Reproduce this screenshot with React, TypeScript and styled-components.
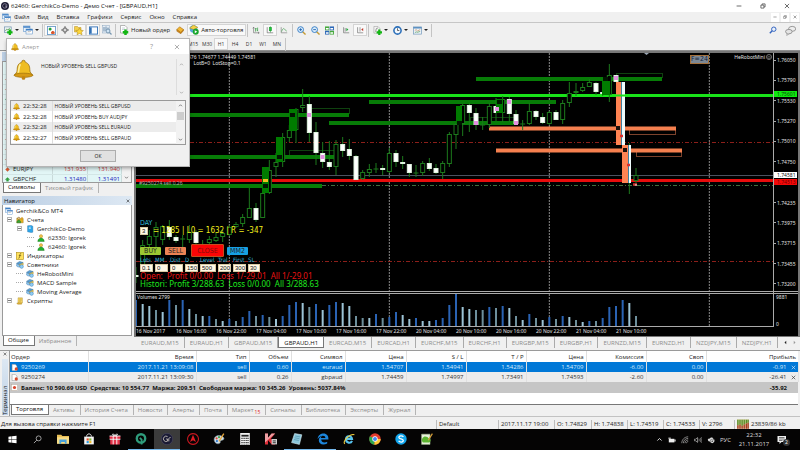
import React from "react";
import styled, { createGlobalStyle, css } from "styled-components";

const UI = `"Open Sans", "Noto Sans", sans-serif`;
const CHART = `"Noto Sans", "DejaVu Sans", sans-serif`;
const ROBOT = `"DejaVu Sans Condensed", "DejaVu Sans", sans-serif`;

const GlobalStyle = createGlobalStyle`
  * { box-sizing: border-box; }
  html, body { margin: 0; padding: 0; }
  body { background: #f0f0f0; color: #222; font: 6px/8px ${UI}; overflow: hidden; }
  button, input, select { font: inherit; color: inherit; margin: 0; padding: 0; border: 0; background: none; border-radius: 0; }
  table { border-collapse: collapse; border-spacing: 0; }
  td, th { padding: 0; font-weight: 400; text-align: left; }
  ul { margin: 0; padding: 0; list-style: none; }
  svg { display: block; }
`;

/* ---------- icons ---------- */

const drawings: Record<string, React.ReactNode> = {
  logo: (<><circle cx="10" cy="10" r="10" fill="#1d1c33" /><path d="M14 6.5A5.5 5.5 0 1 0 15 11h-4M11 8h5M13 11v4" fill="none" stroke="#b9b4c9" strokeWidth="1.4" /></>),
  windows: (<><rect x="1" y="2" width="13" height="11" fill="#e8f2fb" stroke="#4b86c4" /><path d="M1 4h13" stroke="#3f7fc4" strokeWidth="3" /><rect x="6" y="8" width="13" height="10" fill="#fff" stroke="#4b86c4" /><path d="M6 9.500h13" stroke="#3f7fc4" strokeWidth="3" /><path d="M8 15l2-2 2 1 4-2" fill="none" stroke="#777" /></>),
  newChart: (<><rect x="1" y="2" width="15" height="12" fill="#eef4f4" stroke="#6d8fae" strokeWidth="1.500" /><path d="M3 11l3-4 3 2 4-5" fill="none" stroke="#4a8a4a" strokeWidth="1.500" /><path d="M13 8v12M7 14h12" stroke="#13b513" strokeWidth="5" /></>),
  market: (<><rect x="1" y="1" width="18" height="18" fill="#fff" stroke="#6c9cc9" strokeWidth="2" /><path d="M4 7h6M7 4v6" stroke="#1e9e3a" strokeWidth="4" /><path d="M9 15h8M13 11v7" stroke="#d8552b" strokeWidth="4" /></>),
  cross: (<><circle cx="10" cy="10" r="5.500" fill="none" stroke="#555" strokeWidth="2" /><path d="M10 0v8M10 12v8M0 10h8M12 10h8" stroke="#555" strokeWidth="2" /></>),
  folder: (<><path d="M1 3h6l2 2h5v9H1z" fill="#f5d04c" stroke="#b18a1e" /><path d="M11 6l2.500 4.500 5 .5-3.500 3.500 1 5-5-2.500-5 2.500 1-5-3.500-3.500 5-.5z" fill="#ffd83a" stroke="#a8851e" /></>),
  navigator: (<><rect x="1" y="2" width="18" height="16" fill="#f7fbff" stroke="#2f6fb5" strokeWidth="2" /><path d="M4 3v14" stroke="#2f6fb5" strokeWidth="4" /></>),
  tester: (<><rect x="1" y="1" width="14" height="15" fill="#e6eef6" stroke="#8ba6c0" /><path d="M4 4v9M8 3v9M12 5v8" stroke="#6b8cab" strokeWidth="2" /><circle cx="12" cy="12" r="4" fill="#cfe4f5" stroke="#7796b0" strokeWidth="2" /><path d="M15 15l4 4" stroke="#7796b0" strokeWidth="2.500" /></>),
  order: (<><path d="M3 1h9l4 4v11H3z" fill="#fff" stroke="#777" /><path d="M6 6h6M6 9h7" stroke="#9ab" /><path d="M13 9v11M7.500 14.500h11" stroke="#13b513" strokeWidth="5" /></>),
  book: (<><path d="M2 9l7-7 10 7-7 9z" fill="#f2b632" stroke="#a96f12" strokeWidth="1.500" /><path d="M2 9v4l10 6.500 7-8V9l-7 7z" fill="#d98c1c" stroke="#8b5a10" /></>),
  auto: (<><circle cx="9" cy="8" r="7.500" fill="#5aa7dc" /><path d="M1 6l8-6 9 5-9 4z" fill="#f4cf44" stroke="#9b8426" /><circle cx="13.500" cy="13.500" r="6" fill="#16a52a" /><path d="M11.500 10.500v6l5-3z" fill="#fff" /></>),
  bars: (<><path d="M4 3v14h14M4 3L2 6M4 3l2 3M18 17l-3-2M18 17l-3 2" fill="none" stroke="#666" strokeWidth="1.500" /><path d="M9 5v9M9 7h3M14 4v9M12 11h2" stroke="#2c9a3c" strokeWidth="1.800" /></>),
  candle: (<><path d="M3 3v14h15" fill="none" stroke="#666" strokeWidth="1.600" /><path d="M11 1v15" stroke="#158a2a" strokeWidth="1.500" /><rect x="8" y="3" width="6" height="9" fill="#1fc43a" stroke="#158a2a" /></>),
  line: (<><path d="M3 3v14h15" fill="none" stroke="#777" strokeWidth="1.600" /><path d="M4 14c3-9 6-9 8-5l5 4" fill="none" stroke="#3e9c4a" strokeWidth="1.600" /></>),
  zoomIn: (<><path d="M12 12l7 7" stroke="#c49a32" strokeWidth="3" /><circle cx="8" cy="8" r="6.500" fill="#d8ecfb" stroke="#2f78c4" strokeWidth="2" /><path d="M8 5v6M5 8h6" stroke="#2263ad" strokeWidth="2" /></>),
  zoomOut: (<><path d="M12 12l7 7" stroke="#c49a32" strokeWidth="3" /><circle cx="8" cy="8" r="6.500" fill="#d8ecfb" stroke="#2f78c4" strokeWidth="2" /><path d="M5 8h6" stroke="#2263ad" strokeWidth="2" /></>),
  tile: (<><rect x="0" y="1" width="9.500" height="8.500" fill="#46a83c" /><rect x="10.500" y="1" width="9.500" height="8.500" fill="#2c68b8" /><rect x="0" y="10.500" width="9.500" height="8.500" fill="#2c68b8" /><rect x="10.500" y="10.500" width="9.500" height="8.500" fill="#46a83c" /><path d="M2 6h6M12 6h6M2 15.500h6M12 15.500h6" stroke="#fff" strokeWidth="3" /></>),
  scroll: (<><path d="M4 3v14h14" fill="none" stroke="#666" strokeWidth="1.600" /><path d="M8 5v9" stroke="#666" strokeWidth="1.500" /><path d="M11 5v8l5-4z" fill="#22a63a" /></>),
  shift: (<><path d="M4 3v14h14" fill="none" stroke="#666" strokeWidth="1.600" /><path d="M10 3v11" stroke="#666" strokeWidth="1.500" /><path d="M18 5v8l-5-4z" fill="#c0392b" /></>),
  indicator: (<><path d="M2 1h9l4 4v11H2z" fill="#f2f2f2" stroke="#888" /><path d="M6 13c1-8 2-9 5-8" fill="none" stroke="#666" strokeWidth="1.500" /><path d="M14 8v12M8 14h12" stroke="#13b513" strokeWidth="5" /></>),
  clock: (<><circle cx="10" cy="10" r="8" fill="#f3f8fd" stroke="#2b6fb9" strokeWidth="3.500" /><path d="M10 5v5h4" fill="none" stroke="#333" strokeWidth="1.600" /></>),
  template: (<><rect x="1" y="2" width="18" height="16" fill="#eef3f8" stroke="#6e94b8" strokeWidth="1.500" /><path d="M1 4h18" stroke="#4d86bd" strokeWidth="3" /><path d="M4 10l3-2 3 3 6-3" fill="none" stroke="#c08a5a" strokeWidth="1.500" /><path d="M4 15l3-2 3 1 6-2" fill="none" stroke="#4a9a5a" strokeWidth="1.500" /></>),
  search: (<><circle cx="12" cy="8" r="5.500" fill="#eaf2fc" stroke="#3565c0" strokeWidth="2.500" /><path d="M8 12l-6 6" stroke="#3565c0" strokeWidth="3.500" /></>),
  chat: (<><ellipse cx="13" cy="7" rx="6.500" ry="4.500" fill="#eee" stroke="#888" strokeWidth="1.500" /><ellipse cx="7" cy="12" rx="6" ry="4" fill="#e4e4e4" stroke="#888" strokeWidth="1.500" /><path d="M4 15l-1 4 5-3" fill="#ddd" stroke="#888" /></>),
  bell: (<><path d="M10 1.200a1.600 1.600 0 0 1 1.600 1.800C15 4 16 7 16 10c0 3 1.500 4 3 5.500H1C2.500 14 4 13 4 10c0-3 1-6 4.400-7A1.600 1.600 0 0 1 10 1.200z" fill="#efbd22" stroke="#96690a" strokeWidth=".7" /><path d="M7 5c-1.500 2-1.300 5-2 8" fill="none" stroke="#fff0a0" strokeWidth="1.600" /><ellipse cx="10" cy="15.500" rx="9" ry="2" fill="#d79a14" stroke="#96690a" strokeWidth=".6" /><circle cx="10" cy="18" r="1.800" fill="#c28512" /></>),
  accounts: (<><path d="M2 5h7l2 2h7v10H2z" fill="#e6b422" stroke="#8f6a12" /><circle cx="7" cy="6" r="3" fill="#e9c68c" stroke="#6b4d18" /><path d="M2 17c0-9 10-9 10 0z" fill="#36a336" stroke="#1d6b1d" /><circle cx="15" cy="6" r="3" fill="#d8a02c" /></>),
  server: (<><path d="M4 2l9-1 4 2v15l-4 1-9-2z" fill="#2da5e8" stroke="#1867a3" /><path d="M7 6l5-.5M7 9l5-.3" stroke="#fff" strokeWidth="1.500" /></>),
  user: (<><circle cx="10" cy="5.500" r="4" fill="#f3c34a" stroke="#a97d18" /><path d="M2 19c0-12 16-12 16 0z" fill="#23b02d" stroke="#136f1a" /></>),
  fx: (<><rect x="1" y="1" width="18" height="18" fill="#ffe25c" stroke="#b08d18" strokeWidth="1.500" /><path d="M13 4c-3-1-3 2-3.500 5S9 16 6 15.500M7 9h6" fill="none" stroke="#5b4a12" strokeWidth="1.600" /></>),
  expert: (<><path d="M1 9c-1 5 4 7 9 6l-2-7z" fill="#8cc4ec" stroke="#2d6ea8" /><path d="M1 6l8-5 9 3-8 5z" fill="#5a9fd4" stroke="#1f5a8c" /><path d="M9 9l9-4v5l-4 4-5-3z" fill="#f0d060" stroke="#8f7a22" /><circle cx="14" cy="14" r="4.500" fill="#8fcdf5" stroke="#2d6ea8" /></>),
  script: (<><path d="M5 2h11v13H5z" fill="#f8d96a" stroke="#a78422" /><path d="M2 15h12v3H4zM8 5h6M8 8h6M8 11h4" fill="#eab93c" stroke="#a78422" /></>),
  doc: (<><path d="M3 1h9l5 5v13H3z" fill="#fff" stroke="#888" strokeWidth="1.500" /><circle cx="15" cy="14" r="4.500" fill="#d94a2b" /></>),
  balance: (<><rect x="1" y="1" width="18" height="18" fill="#fff" stroke="#b5a596" strokeWidth="1.500" /><circle cx="10" cy="10" r="4.500" fill="#d8452b" /></>),
  up: <path d="M10 2l9 8h-5v7H6v-7H1z" fill="#2fa33a" stroke="#1d7a28" />,
  down: <path d="M10 18l8-8-8-8-8 8z" fill="#dc5a32" stroke="#a83c1c" />,
  chevUp: <path d="M4 13l6-6 6 6" fill="none" stroke="currentColor" strokeWidth="2.800" />,
  chevDown: <path d="M4 7l6 6 6-6" fill="none" stroke="currentColor" strokeWidth="2.800" />,
  close: <path d="M3 3l14 14M17 3L3 17" fill="none" stroke="currentColor" strokeWidth="2.600" />,
  min: <path d="M2 10h16" stroke="currentColor" strokeWidth="2.600" />,
  restore: <path d="M3 7h10v10H3zM7 7V3h10v10h-4" fill="none" stroke="currentColor" strokeWidth="2.400" />,
  left: <path d="M13 3v14L6 10z" fill="currentColor" />,
  right: <path d="M7 3v14l7-7z" fill="#999" />,
  smile: (<><circle cx="10" cy="10" r="8.500" fill="none" stroke="#ddd" strokeWidth="1.600" /><path d="M5.500 11.500c1 4 8 4 9 0" fill="none" stroke="#ddd" strokeWidth="1.600" /><circle cx="7" cy="7.500" r="1.300" fill="#ddd" /><circle cx="13" cy="7.500" r="1.300" fill="#ddd" /></>),
  traffic: (<><rect x="0" y="2" width="20" height="16" fill="#d8d2a8" /><path d="M1.500 3v9M5 3v8M8.500 3v10M12 3v8M15.500 3v6M18.500 3v5" stroke="#4f8a1e" strokeWidth="2.200" /><path d="M1.500 12v6M5 11v7M8.500 13v5M12 11v7M15.500 9v9M18.500 8v10" stroke="#a8321c" strokeWidth="2.200" /></>),
  /* taskbar */
  start: <path d="M1 4l7-1v6.500H1zM9 2.900L19 1.500v8H9zM1 10.500h7V17l-7-1zM9 10.500h10v8L9 17.100z" fill="#fff" />,
  find: (<><circle cx="12.500" cy="7.500" r="5.500" fill="none" stroke="#ddd" strokeWidth="1.500" /><path d="M8.500 11.500L2 18" stroke="#ddd" strokeWidth="1.600" /></>),
  explorer: (<><path d="M0 3h7l2 2h11v12H0z" fill="#e9bf55" /><path d="M0 7h20v11H0z" fill="#f9dd86" /><path d="M4 11h12v7h-3v-3H7v3H4z" fill="#4aa3dc" /></>),
  store: (<><path d="M2 6h16v13H2z" fill="#f4f4f4" /><path d="M6 6c0-6 8-6 8 0" fill="none" stroke="#f4f4f4" strokeWidth="1.500" /><path d="M6 9h3.600v3.600H6z" fill="#e2502b" /><path d="M10.400 9H14v3.600h-3.600z" fill="#7cb82f" /><path d="M6 13.400h3.600V17H6z" fill="#2c9be0" /><path d="M10.400 13.400H14V17h-3.600z" fill="#f2b927" /></>),
  gift: (<><path d="M1 5h18v5H1zM2 11h16v8H2z" fill="#e3344a" /><path d="M1 5h18M1 10.500h18M7 5v14M13 5v14" stroke="#fff" strokeWidth="1.500" /><path d="M10 5C4 4 5-1 10 4c5-5 6 0 0 1z" fill="none" stroke="#fff" strokeWidth="1.500" /></>),
  quik: (<><circle cx="10" cy="9" r="7" fill="none" stroke="#2f9c7c" strokeWidth="4" /><path d="M8 8l3 3v8" fill="none" stroke="#2f9c7c" strokeWidth="3" /></>),
  gerchik: (<><circle cx="10" cy="10" r="9.500" fill="#1a1a34" stroke="#4b4a66" /><path d="M11 6a4.500 4.500 0 1 0 0 7.500V10H8.500M13 14v-4c0-1.500 1-2.500 3-2.500" fill="none" stroke="#d8d2c8" strokeWidth="1.300" /></>),
  atas: (<><path d="M10 1a9 9 0 1 0 .1 0" fill="none" stroke="#c81820" strokeWidth="1.800" /><path d="M10 3l5 12-5-3-5 3z" fill="#e21b24" /></>),
  palette: (<><path d="M2 12C1 5 10 2 16 6c4 3 2 6-1 6s-3 2-3 4c-1 3-9 3-10-4z" fill="#cfe0ea" stroke="#8296a3" /><circle cx="6" cy="9" r="1.800" fill="#e04a32" /><circle cx="10" cy="7" r="1.800" fill="#3da34a" /><circle cx="6.500" cy="13.500" r="1.800" fill="#2d74c8" /><path d="M10 14l8-13" stroke="#e5a53a" strokeWidth="2.200" /></>),
  calc: (<><path d="M2 0h16v20H2z" fill="#f2f2f2" /><path d="M4 3h12v3H4z" fill="#222" /><path d="M5 8v11M8.500 8v11M12 8v11M15 8v11" stroke="#222" strokeWidth="2" strokeDasharray="2 1.500" /></>),
  kasper: (<><path d="M0 1h5v7l6-7h6l-7 8 7 10h-6L5 12v7H0z" fill="#e0303a" /><path d="M0 1h5v7l6-7h6L0 16z" fill="#f5e9e9" opacity=".6" /><path d="M11 10h9v9h-9z" fill="#ccc" /><path d="M13 12h5v2h-5zM13 15h5v2h-5z" fill="#555" /></>),
  notepad: (<><path d="M6 1l12 2-4 16-13-3z" fill="#8cc7dc" stroke="#d9eef5" /><path d="M7 5l8 1.500M6 8l8 1.500M5 11l8 1.500" stroke="#4b8ba5" /></>),
  edge: (<path d="M1 10C2 3 7 1 11 1c5 0 8 4 8 8v2H7c0 5 6 6 10 3.500v3C9 21 3 18 3 12c0-4 3-6 6-7-2 1-2.500 2-2.500 3.500H14C14 3 6 3 1 10z" fill="#1d86dc" />),
  ie: (<><path d="M15 13c-2 5-10 4-10-2.500S14 3.500 15 10H6" fill="none" stroke="#58c4f0" strokeWidth="3.500" /><path d="M3 18C-2 14 13 0 19 3" fill="none" stroke="#f3cf3e" strokeWidth="1.800" /></>),
  chrome: (<><circle cx="10" cy="10" r="9.500" fill="#e33b2e" /><path d="M10 10L1.500 5.500A9.500 9.500 0 0 0 9 19.500z" fill="#2da94f" /><path d="M10 10h9.500A9.500 9.500 0 0 1 9 19.500z" fill="#fcc934" /><circle cx="10" cy="10" r="4.500" fill="#fff" /><circle cx="10" cy="10" r="3.300" fill="#4285f4" /></>),
  skype: (<><circle cx="10" cy="10" r="9.500" fill="#12a5ec" /><path d="M14 6.500C12 4 6 4.500 6.500 7.500S14 9.500 13.800 13C13 16 8 15.500 6 13" fill="none" stroke="#fff" strokeWidth="2.200" /></>),
  npp: (<><path d="M1 2h14v17H1z" fill="#e9f2dc" stroke="#9fb58a" /><path d="M3 8c3-4 8-2 10 1 4 0 4 6 0 7H4c-3-1-3-6-1-8z" fill="#5cb531" /><path d="M12 12l7-11" stroke="#d9a03a" strokeWidth="2" /></>),
  battery: (<><path d="M2 7h14v9H2z" fill="#eee" /><path d="M16 9h3v5h-3z" fill="#eee" /><path d="M1 4h6v3H1z" fill="#ccc" /></>),
  wifi: (<path d="M2 18C2 9 9 2 18 2M6 18c0-7 5-12 12-12M10 18c0-5 3-8 8-8M14 18c0-3 1-4 4-4" fill="none" stroke="#bbb" strokeWidth="1.700" />),
  sound: (<><path d="M1 8h3l5-4v12l-5-4H1z" fill="none" stroke="#ddd" strokeWidth="1.500" /><path d="M12 7c1.500 2 1.500 4 0 6M15 5c3 3 3 7 0 10M18 3c3 4 3 10 0 14" fill="none" stroke="#bbb" strokeWidth="1.500" /></>),
  cloud: (<><path d="M3 12c-3-4 2-7 4-5 2-5 9-3 9 1 4 0 4 6 0 6H5z" fill="#ddd" /><circle cx="13" cy="13" r="5" fill="#fff" stroke="#000" /><path d="M11 13h4M13 11v4" stroke="#000" strokeWidth="1.500" /></>),
  notice: (<><path d="M1 2h17v12H9l-4 4v-4H1z" fill="#eee" /><path d="M4 5h11M4 8h11M4 11h7" stroke="#222" strokeWidth="1.200" /></>),
};

const Svg = styled.svg<{ $s: number }>`
  width: ${(p) => p.$s}px;
  height: ${(p) => p.$s}px;
  flex: none;
`;
const Icon = ({ name, size = 9 }: { name: string; size?: number }) => (
  <Svg $s={size} viewBox="0 0 20 20" aria-hidden="true">{drawings[name]}</Svg>
);

/* ---------- window frame ---------- */

const Window = styled.div`
  position: relative;
  display: grid;
  grid-template-rows: auto auto auto 1fr auto auto auto;
  grid-template-columns: minmax(0, 1fr);
  height: 100vh;
`;
const TitleBar = styled.header`
  display: flex;
  align-items: center;
  height: 12px;
  padding: 0 10px 0 1px;
  background: #fff;
  color: #111;
  gap: 2px;
`;
const Title = styled.h1`
  flex: 1;
  margin: 0;
  font: 6px/10px ${UI};
`;
const Controls = styled.div`
  display: flex;
  gap: 18px;
  color: #444;
`;
const PlainButton = styled.button`
  display: grid;
  place-items: center;
  color: inherit;
`;
const MenuBar = styled.nav`
  display: flex;
  align-items: center;
  height: 11px;
  padding: 0 1px 0 2px;
  border-bottom: 1px solid #c6c6c6;
`;
const MenuItem = styled.button`
  margin-left: 8px;
  line-height: 8px;
  &:first-of-type { margin-left: 3px; }
`;
const MdiControls = styled.div`
  display: flex;
  gap: 2px;
  margin-left: auto;
  color: #555;
  ${PlainButton} { width: 8px; height: 9px; background: #fff; }
`;
const Toolbars = styled.div`
  height: 28px;
  border-bottom: 1px solid #8f8f8f;
`;
const ToolRow = styled.div`
  display: flex;
  align-items: center;
  height: 14px;
`;
const ToolGroup = styled.div`
  display: flex;
  align-items: center;
  height: 13px;
  border-right: 1px solid #c4c4c4;
  padding: 0 1px;
`;
const Tool = styled.button<{ $on?: boolean; $drop?: boolean; $wide?: boolean }>`
  display: flex;
  align-items: center;
  justify-content: center;
  gap: 2px;
  min-width: 14px;
  height: 12px;
  font-size: 6px;
  ${(p) => p.$wide && css`padding: 0 3px 0 2px;`}
  ${(p) => p.$on && css`background: #f9f9f9; box-shadow: inset 0 0 0 1px #d4d4d4;`}
  ${(p) => p.$drop && css`
    min-width: 20px;
    &::after { content: ""; border: 2px solid transparent; border-top-color: #222; border-bottom: 0; }
  `}
`;
const PeriodLead = styled.div`
  width: 185px;
`;
const Period = styled(Tool)`
  font-size: 5px;
  color: #333;
`;
const ToolEnd = styled.div`
  display: flex;
  gap: 8px;
  margin-left: auto;
  padding-right: 4px;
`;

/* ---------- left dock ---------- */

const Main = styled.main`
  display: grid;
  grid-template-columns: 134px minmax(0, 1fr);
  min-height: 0;
`;
const Dock = styled.aside`
  display: flex;
  flex-direction: column;
  padding: 1px 2px 4px 2px;
  gap: 3px;
  min-height: 0;
`;
const Panel = styled.section<{ $grow?: boolean }>`
  display: flex;
  flex-direction: column;
  min-height: 0;
  flex: ${(p) => (p.$grow ? "1" : "0 0 141px")};
`;
const PanelHead = styled.div`
  display: flex;
  justify-content: space-between;
  align-items: center;
  height: 9px;
  padding: 0 2px;
  background: linear-gradient(90deg, #bccfe4, #dde8f3);
  color: #111;
`;
const PanelBody = styled.div`
  flex: 1;
  min-height: 0;
  overflow: hidden;
  background: #fff;
  border: 1px solid #9a9a9a;
  border-top: 0;
`;
const Quotes = styled.div`
  display: flex;
  flex: 1;
  min-height: 0;
  overflow: hidden;
  background: #e2f6f6;
  border: 1px solid #9a9a9a;
`;
const QuoteTable = styled.table`
  flex: 1;
  table-layout: fixed;
  align-self: flex-start;
  td { height: 10px; border-right: 1px solid #c9dada; border-bottom: 1px solid #d3e6e6; line-height: 8px; }
  tr:first-child td { height: 12px; }
`;
const QuoteCell = styled.td<{ $c: string }>`
  color: ${(p) => p.$c};
  && { text-align: right; }
  padding-right: 1px;
`;
const Named = styled.span`
  display: flex;
  align-items: center;
  gap: 3px;
  padding-left: 2px;
`;
const ScrollTrack = styled.div`
  display: flex;
  flex-direction: column;
  justify-content: space-between;
  align-items: center;
  width: 9px;
  padding: 2px 0;
  background: #f2f2f2;
  color: #555;
`;
const Tabs = styled.div`
  display: flex;
  height: 10px;
  padding-left: 1px;
`;
const Tab = styled.button<{ $on?: boolean }>`
  padding: 0 5px 0 4px;
  line-height: 9px;
  white-space: nowrap;
  color: #8c8c8c;
  border-right: 1px solid #b4b4b4;
  ${(p) => p.$on && css`color: #111; background: #fff; border: 1px solid #777; border-top: 0;`}
`;
const Tree = styled.ul`
  padding-top: 1px;
`;
const TreeRow = styled.li<{ $d: number }>`
  display: flex;
  align-items: center;
  gap: 3px;
  height: 9px;
  padding-left: ${(p) => [2, 4, 14, 24, 13][p.$d]}px;
  white-space: nowrap;
`;
const Twist = styled.span`
  width: 5px;
  height: 5px;
  margin-right: 1px;
  border: 1px solid #b5b5b5;
  background: linear-gradient(#777, #777) center / 3px 1px no-repeat #fff;
`;
const Dash = styled.span`
  width: 7px;
  border-top: 1px dotted #aaa;
`;

/* ---------- chart ---------- */

const ChartColumn = styled.section`
  display: grid;
  grid-template-rows: minmax(0, 1fr) 13px;
  min-width: 0;
  min-height: 0;
`;
const ChartFrame = styled.div`
  display: grid;
  grid-template: minmax(0, 1fr) 36px 9px / minmax(0, 1fr) 24px;
  min-height: 0;
  background: #000;
  color: #e2e2e2;
  border: solid #777;
  border-width: 2px 2px 1px;
  font: 5px/6px ${CHART};
`;
const Plot = styled.div`
  position: relative;
  min-height: 0;
  border-right: 1px solid #aaa;
  overflow: hidden;
  > svg { width: 100%; height: 100%; }
`;
const VolumePlot = styled(Plot)`
  border-top: 3px double #aaa;
  border-bottom: 1px solid #aaa;
`;
const VolumeName = styled.span`
  position: absolute;
  top: 0;
  left: 1px;
`;
const PriceAxis = styled.div`
  position: relative;
  display: flex;
  flex-direction: column;
  justify-content: space-between;
  padding: 4px 1px 4px 0;
  min-height: 0;
`;
const Price = styled.span<{ $bg?: string; $fg?: string }>`
  padding-left: 3px;
  line-height: 6px;
  background: ${(p) => p.$bg || "linear-gradient(#aaa, #aaa) 0 50% / 2px 1px no-repeat"};
  color: ${(p) => p.$fg || "inherit"};
`;
const PriceTag = styled(Price)<{ $at: number }>`
  position: absolute;
  left: 0;
  right: 1px;
  top: ${(p) => p.$at}%;
`;
const VolumeAxis = styled.div`
  display: flex;
  flex-direction: column;
  justify-content: space-between;
  padding: 0 0 0 2px;
  border-top: 3px double #aaa;
`;
const TimeAxis = styled.div`
  grid-column: 1 / -1;
  display: grid;
  grid-template-columns: repeat(16, minmax(0, 1fr));
  padding-right: 22px;
  span { white-space: nowrap; line-height: 8px; }
`;
const Comment = styled.div`
  position: absolute;
  top: 1px;
  left: 42px;
  white-space: pre;
`;
const RobotName = styled.div`
  position: absolute;
  top: 1px;
  right: 1px;
  display: flex;
  align-items: center;
  gap: 1px;
`;
const Factor = styled.div`
  position: absolute;
  top: 2px;
  right: 64px;
  width: 19px;
  border: 1px solid #a5713c;
  background: #7d8894;
  color: #17233a;
  font: 7px/7px ${ROBOT};
`;
const OrderName = styled.div`
  position: absolute;
  top: 127px;
  left: 3px;
  color: #aaa;
`;
const Robot = styled.div`
  position: absolute;
  left: 4px;
  bottom: 3px;
  font: 8px/8px ${ROBOT};
  white-space: pre;
`;
const Day = styled.div`
  color: #2fb9d6;
  height: 7px;
  font-size: 7px;
  line-height: 7px;
`;
const Row = styled.div<{ $gap?: number; $h?: number }>`
  display: flex;
  align-items: center;
  gap: ${(p) => p.$gap || 0}px;
  height: ${(p) => p.$h || 8}px;
`;
const Field = styled.input<{ $w: number }>`
  width: ${(p) => p.$w}px;
  height: 8px;
  margin-right: 2px;
  padding-left: 1px;
  background: #fff8e6;
  border: 1px solid #d8c9a2;
  color: #111;
  font: 6px/6px "Liberation Sans", sans-serif;
`;
const Levels = styled.span`
  color: #f0ee1c;
`;
const Trade = styled.button<{ $bg: string; $w: number; $big?: boolean }>`
  width: ${(p) => p.$w}px;
  height: ${(p) => (p.$big ? 13 : 8)}px;
  background: ${(p) => p.$bg};
  color: #222;
  font-size: 7px;
  line-height: 8px;
  border-radius: 1px;
  ${(p) => p.$big && css`border: 1px solid #c44d1e; color: #7c0d0d; margin: 0 -1px 0 1px;`}
`;
const Caption = styled.label<{ $w: number }>`
  width: ${(p) => p.$w}px;
  color: #35b8dc;
  font-size: 6px;
`;
const Result = styled.div<{ $c: string }>`
  color: ${(p) => p.$c};
  font-family: ${CHART};
`;
const ChartTabs = styled.div`
  display: flex;
  align-items: stretch;
  padding: 0 3px 2px 2px;
  overflow: hidden;
`;
const ChartTab = styled.button<{ $on?: boolean }>`
  padding: 1px 5px 0;
  line-height: 10px;
  color: #8c8c8c;
  border-right: 1px solid #aaa;
  white-space: nowrap;
  ${(p) => p.$on && css`background: #fff; color: #111; border: 1px solid #777; border-top: 0;`}
`;
const TabArrows = styled.div`
  display: flex;
  gap: 4px;
  margin-left: auto;
  align-items: center;
  color: #222;
`;

const STEP = 20 / 3;
const X0 = 136;
/* high, low, body top, body bottom, 1 = falling */
const candles: number[][] = [
  [267, 283, 275, 277, 1], [240, 272, 245, 270, 0], [230, 248, 236, 245, 0], [222, 250, 227, 237, 0], [225, 245, 226, 240, 0],
  [220, 240, 227, 237, 1], [235, 243, 237, 241, 1], [235, 253, 239, 239, 0], [225, 243, 232, 240, 0], [230, 245, 232, 243, 1],
  [240, 246, 243, 244, 1], [236, 244, 239, 243, 0], [233, 242, 237, 241, 0], [230, 242, 233, 237, 0], [225, 236, 227, 235, 0],
  [222, 228, 224, 227, 0], [214, 227, 217, 224, 0], [188, 218, 208, 218, 0], [203, 222, 208, 220, 1], [190, 218, 193, 218, 0],
  [160, 194, 170, 193, 0], [153, 177, 162, 167, 0], [133, 167, 137, 162, 0], [125, 142, 130, 138, 0], [108, 143, 109, 130, 0],
  [89, 112, 105, 108, 0], [96, 142, 104, 133, 1], [122, 165, 132, 153, 1], [142, 168, 153, 162, 1], [141, 170, 162, 167, 1],
  [140, 175, 144, 167, 0], [137, 157, 144, 151, 1], [139, 160, 149, 156, 1], [155, 180, 156, 180, 1], [170, 180, 172, 179, 0],
  [164, 177, 169, 173, 0], [163, 173, 169, 169, 0], [165, 175, 168, 170, 1], [148, 173, 153, 172, 0], [150, 167, 153, 162, 1],
  [156, 169, 162, 164, 1], [164, 177, 164, 173, 1], [165, 177, 173, 173, 0], [161, 176, 163, 173, 0], [158, 171, 163, 169, 1],
  [164, 174, 168, 173, 1], [161, 179, 163, 173, 0], [132, 167, 134, 164, 0], [123, 149, 124, 135, 0], [104, 136, 105, 124, 0],
  [103, 132, 105, 113, 1], [108, 130, 113, 125, 1], [117, 130, 125, 125, 0], [103, 128, 106, 125, 0], [98, 121, 106, 113, 1],
  [96, 122, 99, 113, 0], [97, 122, 99, 114, 1], [110, 125, 114, 124, 1], [120, 130, 124, 124, 0], [103, 125, 111, 124, 0],
  [110, 120, 111, 117, 1], [113, 124, 117, 123, 1], [111, 125, 112, 124, 0], [110, 120, 112, 120, 1], [100, 124, 103, 120, 0],
  [82, 107, 93, 103, 0], [83, 96, 91, 93, 0], [83, 92, 87, 91, 0], [79, 87, 82, 87, 0], [82, 95, 83, 92, 1],
  [90, 96, 92, 94, 1], [64, 102, 75, 95, 0], [75, 82, 75, 82, 1], [82, 145, 0, 0, 0], [143, 194, 0, 0, 0], [168, 185, 175, 181, 0],
];
const volumes = [
  26, 22, 20, 16, 14, 26, 21, 26, 17, 12, 10, 10, 7, 5, 7, 5, 9, 15, 10, 11, 9, 7, 10, 21, 24, 23, 19, 22, 16, 21, 24, 23, 20, 10, 8, 8, 12, 8, 9, 14,
  11, 7, 8, 5, 5, 6, 8, 21, 32, 19, 17, 16, 16, 19, 18, 20, 18, 10, 6, 12, 8, 6, 9, 7, 10, 9, 6, 4, 5, 5, 8, 19, 20, 26, 23, 10,
];
const volumeKinds = "bllglbgblglbglbgbbgbgl" + "bbblgblbbllgglbgbb" + "llbllbbbbllggbgblglbglbgblglbgbbbblg";
const volumeColors: Record<string, string> = { b: "#2a63b4", l: "#9cc3d6", g: "#6d8f9c" };
const greenLevels = [[476, 77, 186], [369, 100, 187], [329, 121, 188], [136, 113, 213], [136, 155, 199], [136, 184, 186]];
const orangeLevels = [[489, 126.5, 187], [496, 148.500, 186]];
const blocks = [[262, 167, 7, 26], [276, 137, 7, 25], [289, 109, 8, 22], [456, 106, 6, 18], [496, 99, 7, 14], [602, 81, 8, 14]];
const cells = [[263, 184], [277, 155], [290, 113], [457, 121], [497, 100], [603, 77]];
const marks = [[307, 113], [320.500, 155], [474, 121], [495, 107], [507, 100], [514, 121], [614, 76]];
const outlines = [[309, 108, 40, 5], [289, 150, 46, 5], [470, 117, 46, 4], [616, 73, 46, 4]];
const days = [14, 38, 62, 86];

const PriceChart = () => (
  <svg viewBox="136 53 637 238" preserveAspectRatio="none">
    {days.map((d) => (
      <path key={d} d={`M${X0 + d * STEP} 53V291`} stroke="#888" strokeWidth="1" strokeDasharray="2 1" />
    ))}
    {[142.5, 261.5].map((y) => (
      <path key={y} d={`M136 ${y}H774`} stroke="#8c1f1a" strokeDasharray="4 2 1 2" />
    ))}
    <path d="M322 185.500H774" stroke="#3f6e3f" strokeDasharray="4 2 1 2" />
    <path d="M136 175.500H774" stroke="#4b5160" />
    {outlines.map(([x, y, w, h], i) => <rect key={i} x={x + 0.5} y={y + 0.5} width={w} height={h} fill="none" stroke="#0f420f" />)}
    {greenLevels.map(([x, y, w], i) => <rect key={i} x={x} y={y} width={w} height={4} fill="#077c07" />)}
    {orangeLevels.map(([x, y, w], i) => (
      <g key={i}>
        <rect x={x + 140.500} y={y + 3} width={w - 141} height={5} fill="none" stroke="#7c422c" />
        <rect x={x} y={y} width={w} height={4} fill="#f5804f" />
      </g>
    ))}
    <path d="M136 180.500H774" stroke="#e80c0c" strokeWidth="3" />
    <path d="M136 95.500H774" stroke="#19e319" strokeWidth="3" />
    {candles.map(([h, l, t, b, f], i) => {
      const x = X0 + i * STEP;
      const edge = f ? "#dff5df" : "#1c791c";
      return (
        <g key={i}>
          <path d={`M${x} ${h}V${l}`} stroke="#1c791c" />
          {t === b
            ? t > 0 && <path d={`M${x - 2.5} ${t}h5`} stroke={edge} />
            : <rect x={x - 2} y={t + 0.500} width={4} height={b - t - 1} fill={f ? "#fff" : "#000"} stroke={edge} />}
        </g>
      );
    })}
    {blocks.map(([x, y, w, h], i) => <rect key={i} x={x} y={y} width={w} height={h} fill="#007b00" />)}
    {cells.map(([x, y], i) => <rect key={i} x={x} y={y} width={5} height={4} fill="#001500" />)}
    <rect x="263" y="179" width="5" height="3" fill="#f0c020" />
    {marks.map(([x, y], i) => <rect key={i} x={x} y={y} width={4} height={4} fill="#e391e0" />)}
    <rect x="616" y="82" width="5" height="63" fill="#ff8352" />
    <rect x="621" y="82" width="1" height="63" fill="#3f7fa0" />
    <rect x="622" y="82" width="3" height="63" fill="#effcfc" />
    <rect x="622" y="145" width="6" height="38" fill="#ff8352" />
    <rect x="628" y="145" width="1" height="38" fill="#3f7fa0" />
    <rect x="629" y="145" width="2" height="38" fill="#effcfc" />
    <path d="M616 126h4v4h-4zM623 148h4v4h-4z" fill="#1b0f0a" />
    <path d="M620 136h3M627 165h3M633 184.500h4" stroke="#d83030" strokeWidth="2.500" />
    <path d="M636 184v2" stroke="#eee" />
    <path d="M616 95.500h10" stroke="#19e319" strokeWidth="2" />
    <path d="M644 53h5l-2.500 2z" fill="#9aa6b4" />
  </svg>
);

const VolumeChart = () => (
  <svg viewBox="136 0 637 32" preserveAspectRatio="none">
    {days.map((d) => (
      <path key={d} d={`M${X0 + d * STEP} 0V32`} stroke="#888" strokeDasharray="2 1" />
    ))}
    {volumes.map((v, i) => (
      <rect key={i} x={X0 + i * STEP - 1} y={32 - v} width={2} height={v} fill={volumeColors[volumeKinds[i]]} />
    ))}
  </svg>
);

/* ---------- terminal ---------- */

const Terminal = styled.section`
  display: grid;
  grid-template-columns: 9px minmax(0, 1fr);
  height: 67px;
  padding-right: 2px;
  border-top: 1px solid #9a9a9a;
  border-bottom: 1px solid #c2c2c2;
`;
const Rail = styled.div`
  display: flex;
  flex-direction: column;
  align-items: center;
  justify-content: space-between;
  padding: 1px 1px 1px 2px;
`;
const RailName = styled.span`
  writing-mode: vertical-rl;
  transform: rotate(180deg);
  width: 6px;
  line-height: 6px;
  height: 56px;
  background: linear-gradient(#bccfe4, #dde8f3);
`;
const Sheet = styled.div`
  display: flex;
  flex-direction: column;
  background: #fff;
  border-left: 1px solid #9a9a9a;
`;
const Orders = styled.table`
  width: 100%;
  table-layout: fixed;
  th, td {
    height: 10px;
    line-height: 8px;
    padding-right: 2px;
    text-align: right;
    white-space: nowrap;
    border-right: 1px solid #e0e0e0;
  }
  th { height: 11px; }
  th:first-child, td:first-child { text-align: left; padding-left: 1px; }
  th:last-child { border: 0; }
`;
const OrderRow = styled.tr<{ $on?: boolean }>`
  background: ${(p) => (p.$on ? "#0078d7" : "#ececec")};
  color: ${(p) => (p.$on ? "#d9ecfb" : "#333")};
`;
const BalanceRow = styled.tr`
  background: #c6c6c6;
  color: #111;
  td { font-family: ${CHART}; font-weight: 700; border: 0; height: 11px; }
`;
const Inline = styled.span<{ $end?: boolean; $gap?: number }>`
  display: flex;
  align-items: center;
  gap: ${(p) => p.$gap || 3}px;
  justify-content: ${(p) => (p.$end ? "flex-end" : "flex-start")};
  white-space: pre;
`;
const SheetTabs = styled(Tabs)`
  height: 12px;
  margin-top: auto;
  padding-bottom: 1px;
  background: #f0f0f0;
  border-top: 1px solid #777;
`;
const Count = styled.sub`
  color: #d22;
  font-size: 5px;
  line-height: 1px;
  margin-left: 1px;
`;

/* ---------- status + taskbar ---------- */

const Status = styled.footer`
  display: grid;
  grid-template-columns: minmax(0, 1fr) 62px 56px 37px 36px 36px 36px 35px 66px;
  align-items: center;
  height: 12px;
  padding-left: 1px;
  padding-top: 2px;
`;
const StatusCell = styled.span`
  display: flex;
  align-items: center;
  gap: 2px;
  height: 9px;
  padding-left: 2px;
  white-space: nowrap;
  border-left: 1px solid #bcbcbc;
  &:first-child { border: 0; padding: 0; }
`;
const Taskbar = styled.nav`
  display: flex;
  height: 21px;
  background: #050404;
  color: #ddd;
`;
const TaskButton = styled.button<{ $run?: boolean; $on?: boolean }>`
  display: grid;
  place-items: center;
  width: 26px;
  border-bottom: 1px solid ${(p) => (p.$run || p.$on ? "#76b9ed" : "transparent")};
  background: ${(p) => (p.$on ? "#3b3b3b" : "none")};
  background-clip: padding-box;
  &:first-child { width: 24px; }
`;
const Tray = styled.div`
  display: flex;
  align-items: center;
  gap: 5px;
  margin-left: auto;
  padding-right: 9px;
`;
const Clock = styled.time`
  text-align: center;
  line-height: 9px;
  width: 36px;
`;
const Notice = styled.button`
  position: relative;
  width: 14px;
`;
const Badge = styled.span`
  position: absolute;
  left: 6px;
  top: 4px;
  width: 7px;
  height: 7px;
  border-radius: 4px;
  background: #333;
  color: #fff;
  font: 5px/7px ${UI};
`;

/* ---------- alert ---------- */

const Dialog = styled.div`
  position: absolute;
  left: 7px;
  top: 39px;
  width: 182px;
  height: 127px;
  display: flex;
  flex-direction: column;
  background: #f0f0f0;
  box-shadow: 0 0 0 1px #b5b5b5, 0 2px 4px rgba(0, 0, 0, 0.4);
`;
const DialogTitle = styled.div`
  display: flex;
  align-items: center;
  height: 15px;
  gap: 3px;
  padding: 0 9px 0 4px;
  background: #fff;
  color: #999;
`;
const DialogName = styled.span`
  flex: 1;
`;
const Help = styled.button`
  margin-right: 18px;
  font-size: 7px;
`;
const Message = styled.div`
  display: flex;
  height: 46px;
  padding: 5px 4px 5px 6px;
  gap: 7px;
  font-size: 5px;
`;
const MessageText = styled.p`
  flex: 1;
  margin: 3px 0 0;
`;
const MessageScroll = styled(ScrollTrack)`
  border-left: 1px solid #ddd;
  background: none;
  color: #999;
  padding: 3px 0 0;
`;
const Log = styled.div`
  display: flex;
  height: 45px;
  margin: 0 3px;
  overflow: hidden;
  background: #fff;
  border: 1px solid #999;
`;
const LogTable = styled.table`
  flex: 1;
  table-layout: fixed;
  align-self: flex-start;
  font-size: 5px;
  td { height: 10px; line-height: 8px; border-right: 1px solid #ddd; padding-left: 2px; white-space: nowrap; }
  td:last-child { border: 0; }
  tr:nth-child(odd) { background: #ececec; }
  tr:nth-child(even) td { height: 11px; }
`;
const Time = styled.span`
  font-size: 6px;
`;
const Thumb = styled.span`
  width: 7px;
  height: 8px;
  margin-bottom: 14px;
  background: #cdcdcd;
`;
const Ok = styled.button`
  align-self: center;
  width: 36px;
  height: 12px;
  margin-top: 5px;
  background: #e1e1e1;
  border: 1px solid #adadad;
  font-size: 5px;
  color: #111;
`;

const menu = ["Файл", "Вид", "Вставка", "Графики", "Сервис", "Окно", "Справка"];
const symbolIcons = ["down", "down", "up", "down", "down", "down", "down", "down", "down"];
const tree: [number, string, string][] = [
  [0, "windows", "Gerchik&Co MT4"], [1, "accounts", "Счета"], [2, "server", "GerchikCo-Demo"], [3, "user", "62330: Igorek"],
  [3, "user", "62460: Igorek"], [1, "fx", "Индикаторы"], [1, "expert", "Советники"], [4, "expert", "HeRobotMini"],
  [4, "expert", "MACD Sample"], [4, "expert", "Moving Average"], [1, "script", "Скрипты"],
];
const prices = ["1.76050", "1.75790", "1.75530", "1.75270", "1.75010", "1.74750", "1.74513", "1.74235", "1.73975", "1.73715", "1.73455", "1.73200"];
const times = ["16 Nov 2017", "16 Nov 16:00", "16 Nov 22:00", "17 Nov 04:00", "17 Nov 10:00", "17 Nov 16:00", "17 Nov 22:00",
  "20 Nov 04:00", "20 Nov 10:00", "20 Nov 16:00", "20 Nov 22:00", "21 Nov 04:00", "21 Nov 10:00"];
const chartTabs = ["EURAUD,M15", "EURAUD,H1", "GBPAUD,M15", "GBPAUD,H1", "EURCAD,M15", "EURCAD,H1", "EURCHF,M15", "EURCHF,H1",
  "EURGBP,M15", "EURGBP,H1", "EURNZD,M15", "EURNZD,H1", "NZDJPY,M15", "NZDJPY,H1"];
const columns: [string, number][] = [["Ордер", 78], ["Время", 108], ["Тип", 53], ["Объем", 42], ["Символ", 54], ["Цена", 61],
  ["S / L", 60], ["T / P", 60], ["Цена", 60], ["Комиссия", 60], ["Своп", 60], ["Прибыль", 92]];
const orders = [
  ["9250269", "2017.11.21 13:09:08", "sell", "0.60", "euraud", "1.54707", "1.54941", "1.54286", "1.54709", "-6.00", "0.00", "-0.91"],
  ["9250274", "2017.11.21 13:09:30", "sell", "0.26", "gbpaud", "1.74459", "1.74997", "1.73491", "1.74593", "-2.60", "0.00", "-26.41"],
];
const sheetTabs = ["Торговля", "Активы", "История Счета", "Новости", "Алерты", "Почта", "Маркет", "Сигналы", "Библиотека", "Эксперты", "Журнал"];
const alerts = [["22:32:28", "GBPUSD"], ["22:32:28", "BUY AUDJPY"], ["22:32:28", "EURAUD"], ["22:32:27", "GBPAUD"]];
const fields: [string, string, number][] = [["Lots", "0.1", 13], ["MM", "0", 13], ["Dist", "0", 13], ["D", "150", 13],
  ["Level", "500", 16], ["Tral", "200", 13], ["First", "300", 13], ["SL", "30", 12]];
const apps: [string, string][] = [["start", "Пуск"], ["find", "Поиск"], ["explorer", "Проводник"], ["store", "Магазин"], ["gift", "Подарки"],
  ["quik", "Q"], ["gerchik", "Gerchik"], ["atas", "A"], ["palette", "Paint"], ["calc", "Калькулятор"], ["kasper", "K"], ["notepad", "Блокнот"],
  ["edge", "Edge"], ["ie", "Explorer"], ["chrome", "Chrome"], ["skype", "Skype"], ["npp", "Notepad++"]];

export default function App() {
  return (
    <Window>
      <GlobalStyle />
      <TitleBar>
        <Icon name="logo" size={8} />
        <Title>62460: GerchikCo-Demo - Демо Счет - [GBPAUD,H1]</Title>
        <Controls>
          {["min", "restore", "close"].map((n) => <PlainButton key={n} aria-label={n}><Icon name={n} size={6} /></PlainButton>)}
        </Controls>
      </TitleBar>
      <MenuBar>
        <Icon name="windows" size={9} />
        {menu.map((m) => <MenuItem key={m}>{m}</MenuItem>)}
        <MdiControls>
          {["min", "restore", "close"].map((n) => <PlainButton key={n} aria-label={n}><Icon name={n} size={4} /></PlainButton>)}
        </MdiControls>
      </MenuBar>
      <Toolbars>
        <ToolRow>
          <ToolGroup>
            <Tool $drop aria-label="newChart"><Icon name="newChart" /></Tool>
            <Tool $drop aria-label="windows"><Icon name="windows" size={10} /></Tool>
          </ToolGroup>
          <ToolGroup>
            <Tool $on aria-label="market"><Icon name="market" /></Tool>
            <Tool aria-label="cross"><Icon name="cross" size={8} /></Tool>
            <Tool $on aria-label="folder"><Icon name="folder" size={10} /></Tool>
            <Tool $on aria-label="navigator"><Icon name="navigator" /></Tool>
            <Tool aria-label="tester"><Icon name="tester" size={10} /></Tool>
          </ToolGroup>
          <ToolGroup>
            <Tool $wide><Icon name="order" size={10} />Новый ордер</Tool>
            <Tool aria-label="book"><Icon name="book" size={8} /></Tool>
            <Tool $on $wide><Icon name="auto" size={10} />Авто-торговля</Tool>
          </ToolGroup>
          <ToolGroup>
            <Tool aria-label="bars"><Icon name="bars" size={8} /></Tool>
            <Tool $on aria-label="candle"><Icon name="candle" size={8} /></Tool>
            <Tool aria-label="line"><Icon name="line" size={8} /></Tool>
          </ToolGroup>
          <ToolGroup>
            <Tool aria-label="zoomIn"><Icon name="zoomIn" /></Tool>
            <Tool aria-label="zoomOut"><Icon name="zoomOut" /></Tool>
            <Tool aria-label="tile"><Icon name="tile" /></Tool>
          </ToolGroup>
          <ToolGroup>
            <Tool aria-label="scroll"><Icon name="scroll" size={8} /></Tool>
            <Tool $on aria-label="shift"><Icon name="shift" size={8} /></Tool>
          </ToolGroup>
          <ToolGroup>
            <Tool $drop aria-label="indicator"><Icon name="indicator" /></Tool>
            <Tool $drop aria-label="clock"><Icon name="clock" /></Tool>
            <Tool $drop aria-label="template"><Icon name="template" /></Tool>
          </ToolGroup>
          <ToolEnd>
            <PlainButton aria-label="search"><Icon name="search" size={8} /></PlainButton>
            <PlainButton aria-label="chat"><Icon name="chat" size={11} /></PlainButton>
          </ToolEnd>
        </ToolRow>
        <ToolRow>
          <ToolGroup>
            <PeriodLead />
            {["M15", "M30", "H1", "H4", "D1", "W1", "MN"].map((p) => <Period key={p} $on={p === "H1"}>{p}</Period>)}
          </ToolGroup>
        </ToolRow>
      </Toolbars>

      <Main>
        <Dock>
          <Panel>
            <PanelHead />
            <Quotes>
              <QuoteTable>
                <colgroup><col width="50" /><col width="35" /><col width="34" /></colgroup>
                <tbody>
                  <tr><td colSpan={3} /></tr>
                  {symbolIcons.map((s, i) => <tr key={i}><td><Named><Icon name={s} size={5} /></Named></td><td /><td /></tr>)}
                  <tr><td><Named><Icon name="down" size={5} />EURJPY</Named></td><QuoteCell $c="#c33">131.935</QuoteCell><QuoteCell $c="#c33">131.940</QuoteCell></tr>
                  <tr><td><Named><Icon name="up" size={5} />GBPCHF</Named></td><QuoteCell $c="#22b">1.31480</QuoteCell><QuoteCell $c="#22b">1.31491</QuoteCell></tr>
                </tbody>
              </QuoteTable>
              <ScrollTrack><Icon name="chevUp" size={5} /><Icon name="chevDown" size={5} /></ScrollTrack>
            </Quotes>
            <Tabs><Tab $on>Символы</Tab><Tab>Тиковый график</Tab></Tabs>
          </Panel>
          <Panel $grow>
            <PanelHead>Навигатор<Icon name="close" size={4} /></PanelHead>
            <PanelBody>
              <Tree>
                {tree.map(([d, icon, text]) => (
                  <TreeRow key={text} $d={d}>
                    {(d === 1 || d === 2) && <Twist />}
                    {d > 2 && <Dash />}
                    <Icon name={icon} size={8} />
                    {text}
                  </TreeRow>
                ))}
              </Tree>
            </PanelBody>
            <Tabs><Tab $on>Общие</Tab><Tab>Избранное</Tab></Tabs>
          </Panel>
        </Dock>

        <ChartColumn>
          <ChartFrame>
            <Plot>
              <PriceChart />
              <Comment>{"1.74576 1.74677 1.74449 1.74581\n            LotB=0  LotStop=0.1"}</Comment>
              <Factor>F=24</Factor>
              <RobotName>HeRobotMini<Icon name="smile" size={6} /></RobotName>
              <OrderName>#9250274 sell 0.26</OrderName>
              <Robot>
                <Day>DAY</Day>
                <Row $gap={3}><Field $w={8} defaultValue="3" aria-label="DAY" /><Levels>= 1285 | L0 = 1632 | R = -347</Levels></Row>
                <Row $h={9} />
                <Row $gap={4} $h={13}>
                  <Trade $bg="#9bc832" $w={21}>BUY</Trade>
                  <Trade $bg="#ee8354" $w={21}>SELL</Trade>
                  <Trade $bg="#fb0505" $w={33} $big>CLOSE</Trade>
                  <Trade $bg="#16a0e4" $w={21}>MM2</Trade>
                </Row>
                <Row $h={6}>
                  {fields.map(([n, , w]) => <Caption key={n} htmlFor={`f-${n}`} $w={w + 2}>{n}</Caption>)}
                </Row>
                <Row $h={9}>
                  {fields.map(([n, v, w]) => <Field key={n} id={`f-${n}`} $w={w} defaultValue={v} />)}
                </Row>
                <Result $c="#e81212">{"Open:  Profit 0/0.00  Loss 1/-29.01  All 1/-29.01"}</Result>
                <Result $c="#1ee61e">{"Histori: Profit 3/288.63  Loss 0/0.00  All 3/288.63"}</Result>
              </Robot>
            </Plot>
            <PriceAxis>
              {prices.map((p) => p === "1.74513"
                ? <Price key={p} $bg="#f40808" $fg="#6e0000">{p}</Price>
                : <Price key={p}>{p}</Price>)}
              <PriceTag $at={16} $bg="#0fe80f" $fg="#0a4a0a">1.75601</PriceTag>
              <PriceTag $at={50} $bg="#fff" $fg="#111">1.74581</PriceTag>
            </PriceAxis>
            <VolumePlot>
              <VolumeChart />
              <VolumeName>Volumes 2799</VolumeName>
            </VolumePlot>
            <VolumeAxis><span>9881</span><span>0</span></VolumeAxis>
            <TimeAxis>{times.map((t) => <span key={t}>{t}</span>)}</TimeAxis>
          </ChartFrame>
          <ChartTabs>
            {chartTabs.map((t) => <ChartTab key={t} $on={t === "GBPAUD,H1"}>{t}</ChartTab>)}
            <TabArrows><Icon name="left" size={5} /><Icon name="right" size={5} /></TabArrows>
          </ChartTabs>
        </ChartColumn>
      </Main>

      <Terminal>
        <Rail><Icon name="close" size={4} /><RailName>Терминал</RailName></Rail>
        <Sheet>
          <Orders>
            <colgroup>{columns.map(([n, w], i) => <col key={n + i} width={w} />)}</colgroup>
            <thead><tr>{columns.map(([n], i) => <th key={n + i}>{n}</th>)}</tr></thead>
            <tbody>
              {orders.map((o, r) => (
                <OrderRow key={o[0]} $on={r === 0}>
                  {o.map((c, i) => (
                    <td key={i}>
                      {i === 0 ? <Inline><Icon name="doc" size={7} />{c}</Inline>
                        : i === 11 ? <Inline $end $gap={4}><span>{c}</span><Icon name="close" size={5} /></Inline> : c}
                    </td>
                  ))}
                </OrderRow>
              ))}
              <BalanceRow>
                <td colSpan={11}><Inline><Icon name="balance" size={7} />{"Баланс: 10 590.69 USD  Средства: 10 554.77  Маржа: 209.51  Свободная маржа: 10 345.26  Уровень: 5037.84%"}</Inline></td>
                <td><Inline $end $gap={9}><span>-35.92</span><span /></Inline></td>
              </BalanceRow>
            </tbody>
          </Orders>
          <SheetTabs>
            {sheetTabs.map((t, i) => <Tab key={t} $on={i === 0}>{t}{t === "Маркет" && <Count>15</Count>}</Tab>)}
          </SheetTabs>
        </Sheet>
      </Terminal>

      <Status>
        <StatusCell>Для вызова справки нажмите F1</StatusCell>
        <StatusCell>Default</StatusCell>
        <StatusCell>2017.11.17 19:00</StatusCell>
        <StatusCell>O: 1.74829</StatusCell>
        <StatusCell>H: 1.74838</StatusCell>
        <StatusCell>L: 1.74519</StatusCell>
        <StatusCell>C: 1.74533</StatusCell>
        <StatusCell>V: 2796</StatusCell>
        <StatusCell><Icon name="traffic" size={12} />23839/86 kb</StatusCell>
      </Status>
      <Taskbar>
        {apps.map(([a, label], i) => <TaskButton key={a} aria-label={label} $on={i === 6} $run={i === 5 || i === 11 || i === 12}><Icon name={a} size={i < 2 ? 9 : 12} /></TaskButton>)}
        <Tray>
          <Icon name="chevUp" size={7} /><Icon name="battery" size={8} /><Icon name="wifi" size={8} /><Icon name="sound" size={8} /><Icon name="cloud" size={8} />
          <span>РУС</span>
          <Clock>22:32<br />21.11.2017</Clock>
          <Notice aria-label="Уведомления"><Icon name="notice" size={10} /><Badge>2</Badge></Notice>
        </Tray>
      </Taskbar>

      <Dialog role="dialog" aria-labelledby="alert-name">
        <DialogTitle>
          <Icon name="bell" size={8} />
          <DialogName id="alert-name">Алерт</DialogName>
          <Help>?</Help>
          <PlainButton aria-label="Закрыть"><Icon name="close" size={6} /></PlainButton>
        </DialogTitle>
        <Message>
          <Icon name="bell" size={21} />
          <MessageText>НОВЫЙ УРОВЕНЬ SELL GBPUSD</MessageText>
          <MessageScroll><Icon name="chevUp" size={5} /><Icon name="chevDown" size={5} /></MessageScroll>
        </Message>
        <Log>
          <LogTable>
            <colgroup><col width="41" /><col /></colgroup>
            <tbody>
              {alerts.map(([t, s], i) => (
                <tr key={i}>
                  <td><Inline $gap={3}><Icon name="bell" size={7} /><Time>{t}</Time></Inline></td>
                  <td>НОВЫЙ УРОВЕНЬ {s.startsWith("BUY") ? s : `SELL ${s}`}</td>
                </tr>
              ))}
              <tr><td><Inline><Icon name="bell" size={7} /></Inline></td><td /></tr>
            </tbody>
          </LogTable>
          <ScrollTrack><Icon name="chevUp" size={5} /><Thumb /><Icon name="chevDown" size={5} /></ScrollTrack>
        </Log>
        <Ok>ОК</Ok>
      </Dialog>
    </Window>
  );
}
